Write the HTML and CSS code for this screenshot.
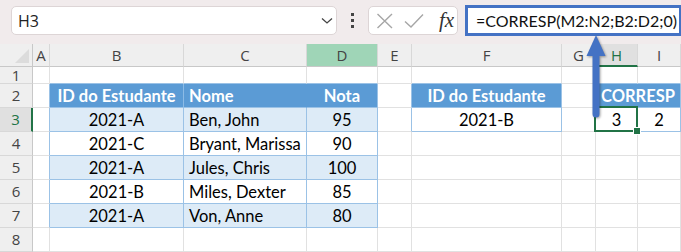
FILE: index.html
```html
<!DOCTYPE html>
<html lang="pt">
<head>
    <meta charset="UTF-8">
    <title>CORRESP</title>
    <link rel="stylesheet" href="styles.css">
</head>
<body>
    <div class="app">
        <!-- barra de fórmulas -->
        <div class="formula-bar">
            <div class="name-box">
                <span>H3</span>
                <svg class="chevron" width="12" height="8" viewBox="0 0 12 8"><path d="M1 1.5 L6 6 L11 1.5" fill="none" stroke="#444" stroke-width="1.3"/></svg>
            </div>
            <div class="dots"><i></i><i></i><i></i></div>
            <div class="fx-box">
                <svg width="18" height="16" viewBox="0 0 18 16"><path d="M1.5 1 L16 15 M16 1 L1.5 15" stroke="#a6a6a6" stroke-width="1.4" fill="none"/></svg>
                <svg width="20" height="16" viewBox="0 0 20 16"><path d="M1 8.5 L7 14 L19 1.5" stroke="#a6a6a6" stroke-width="1.4" fill="none"/></svg>
                <span class="fx">fx</span>
            </div>
            <div class="formula">=CORRESP(M2:N2;B2:D2;0)</div>
        </div>

        <!-- planilha -->
        <div class="sheet">
            <div class="corner"></div>
            <div class="ch">A</div>
            <div class="ch">B</div>
            <div class="ch">C</div>
            <div class="ch ch-green">D</div>
            <div class="ch">E</div>
            <div class="ch">F</div>
            <div class="ch">G</div>
            <div class="ch ch-sel">H</div>
            <div class="ch">I</div>

            <!-- linha 1 -->
            <div class="rh rh-first">1</div>
            <div class="c"></div>
            <div class="c bb"></div>
            <div class="c bb"></div>
            <div class="c bb"></div>
            <div class="c"></div>
            <div class="c bb"></div>
            <div class="c"></div>
            <div class="c bb"></div>
            <div class="c bb"></div>

            <!-- linha 2 -->
            <div class="rh">2</div>
            <div class="c br"></div>
            <div class="c th th-split center">ID do Estudante</div>
            <div class="c th th-join left">Nome</div>
            <div class="c th center">Nota</div>
            <div class="c br"></div>
            <div class="c th center">ID do Estudante</div>
            <div class="c br"></div>
            <div class="c th span2 center">CORRESP</div>

            <!-- linha 3 -->
            <div class="rh rh-sel">3</div>
            <div class="c br"></div>
            <div class="c t band center">2021-A</div>
            <div class="c t band left">Ben, John</div>
            <div class="c t band center">95</div>
            <div class="c br"></div>
            <div class="c t center">2021-B</div>
            <div class="c br"></div>
            <div class="c t center selected">3</div>
            <div class="c t center">2</div>

            <!-- linha 4 -->
            <div class="rh">4</div>
            <div class="c br"></div>
            <div class="c t center">2021-C</div>
            <div class="c t left">Bryant, Marissa</div>
            <div class="c t center">90</div>
            <div class="c"></div>
            <div class="c"></div>
            <div class="c"></div>
            <div class="c"></div>
            <div class="c"></div>

            <!-- linha 5 -->
            <div class="rh">5</div>
            <div class="c br"></div>
            <div class="c t band center">2021-A</div>
            <div class="c t band left">Jules, Chris</div>
            <div class="c t band center">100</div>
            <div class="c"></div>
            <div class="c"></div>
            <div class="c"></div>
            <div class="c"></div>
            <div class="c"></div>

            <!-- linha 6 -->
            <div class="rh">6</div>
            <div class="c br"></div>
            <div class="c t center">2021-B</div>
            <div class="c t left">Miles, Dexter</div>
            <div class="c t center">85</div>
            <div class="c"></div>
            <div class="c"></div>
            <div class="c"></div>
            <div class="c"></div>
            <div class="c"></div>

            <!-- linha 7 -->
            <div class="rh">7</div>
            <div class="c br"></div>
            <div class="c t band center">2021-A</div>
            <div class="c t band left">Von, Anne</div>
            <div class="c t band center">80</div>
            <div class="c"></div>
            <div class="c"></div>
            <div class="c"></div>
            <div class="c"></div>
            <div class="c"></div>

            <!-- linha 8 -->
            <div class="rh">8</div>
            <div class="c"></div>
            <div class="c"></div>
            <div class="c"></div>
            <div class="c"></div>
            <div class="c"></div>
            <div class="c"></div>
            <div class="c"></div>
            <div class="c"></div>
            <div class="c"></div>
        </div>

        <!-- seta azul -->
        <svg class="arrow" width="30" height="90" viewBox="0 0 30 90">
            <path d="M11.5 20 L11.5 80 A3.5 3.5 0 0 0 18.5 80 L18.5 20 Z" fill="#4472c4"/>
            <path d="M15 1 L24.5 22 L5.5 22 Z" fill="#4472c4"/>
        </svg>
    </div>
</body>
</html>
```

FILE: styles.css
```css
/* Reset */
* {
    margin: 0;
    padding: 0;
    box-sizing: border-box;
}

body {
    width: 681px;
    height: 252px;
    overflow: hidden;
    background: #ffffff;
    font-family: 'Lato', 'Liberation Sans', sans-serif;
}

.app {
    position: relative;
    width: 681px;
    height: 252px;
}

/* Barra de fórmulas */
.formula-bar {
    height: 44px;
    background: #f1ebec;
    display: flex;
    align-items: flex-start;
    padding: 6px 0 0 11px;
}

.name-box {
    flex-shrink: 0;
    width: 326px;
    height: 29px;
    background: #ffffff;
    border: 1px solid #ddd5d6;
    border-radius: 5px;
    display: flex;
    align-items: center;
    justify-content: space-between;
    padding: 0 3px 0 6px;
    font-family: 'Open Sans', sans-serif;
    font-size: 16px;
    color: #222;
}

.dots {
    flex-shrink: 0;
    width: 31px;
    height: 29px;
    display: flex;
    flex-direction: column;
    align-items: center;
    justify-content: center;
    gap: 3px;
}

.dots i {
    display: block;
    width: 3px;
    height: 3px;
    background: #444;
}

.fx-box {
    flex-shrink: 0;
    width: 90px;
    height: 29px;
    background: #ffffff;
    border: 1px solid #ddd5d6;
    border-radius: 5px;
    display: flex;
    align-items: center;
    gap: 10px;
    padding-left: 7px;
}

.fx {
    font-family: 'Liberation Serif', serif;
    font-style: italic;
    font-size: 21px;
    color: #333;
    margin-left: 5px;
    line-height: 1;
}

.formula {
    margin: -1px 0 0 7px;
    flex: 1;
    min-width: 0;
    overflow: hidden;
    white-space: nowrap;
    height: 31px;
    border: 3px solid #4472c4;
    border-right-width: 2px;
    background: #ffffff;
    padding-left: 8px;
    font-size: 16px;
    line-height: 25px;
    color: #111;
}

/* Planilha */
.sheet {
    display: grid;
    grid-template-columns: 33px 17px 134px 123px 71px 34px 150px 34px 42px 1fr;
    grid-template-rows: 23px 17px repeat(7, 24px);
}

.corner {
    position: relative;
    background: #efefef;
    border-right: 1px solid #c8c8c8;
    border-bottom: 1px solid #c8c8c8;
}

.corner::after {
    content: "";
    position: absolute;
    right: 3px;
    bottom: 3px;
    border-style: solid;
    border-width: 0 0 14px 14px;
    border-color: transparent transparent #dcdcdc transparent;
}

.ch {
    background: #efefef;
    border-right: 1px solid #d8d8d8;
    border-bottom: 1px solid #c8c8c8;
    font-family: 'Open Sans', sans-serif;
    font-size: 15px;
    color: #444;
    text-align: center;
    line-height: 22px;
}

.ch-green {
    background: #9fd5b7;
}

.ch-sel {
    background: #e0e0e0;
    color: #217346;
    border-bottom: 2px solid #217346;
}

.rh {
    background: #efefef;
    border-right: 1px solid #c8c8c8;
    border-bottom: 1px solid #d8d8d8;
    font-family: 'Open Sans', sans-serif;
    font-size: 15px;
    color: #444;
    text-align: center;
    line-height: 23px;
}

.rh-first {
    line-height: 16px;
}

.rh-sel {
    background: #e0e0e0;
    color: #217346;
    border-right: 2px solid #217346;
}

/* Células */
.c {
    border-right: 1px solid #e1e1e1;
    border-bottom: 1px solid #e1e1e1;
    font-size: 16.5px;
    line-height: 24px;
    color: #000;
    white-space: nowrap;
}

.c.bb {
    border-bottom-color: #9bc2e6;
}

.c.br {
    border-right-color: #9bc2e6;
}

.c.t {
    border-right-color: #9bc2e6;
    border-bottom-color: #9bc2e6;
}

.c.band {
    background: #ddebf7;
}

.c.th {
    background: #5b9bd5;
    color: #ffffff;
    font-weight: 700;
    border-right-color: #9bc2e6;
    border-bottom-color: #9bc2e6;
}

.c.th-split {
    border-right-color: #8cbbe6;
}

.c.th-join {
    border-right-color: #5b9bd5;
}

.span2 {
    grid-column: span 2;
}

.center {
    text-align: center;
}

.left {
    padding-left: 5px;
}

/* Célula selecionada */
.selected {
    position: relative;
}

.selected::before {
    content: "";
    position: absolute;
    left: -2px;
    top: -2px;
    right: -1px;
    bottom: -1px;
    border: 2px solid #217346;
}

.selected::after {
    content: "";
    position: absolute;
    right: -4px;
    bottom: -4px;
    width: 6px;
    height: 6px;
    background: #217346;
    border: 1px solid #ffffff;
}

/* Seta */
.arrow {
    position: absolute;
    left: 581px;
    top: 34px;
    filter: drop-shadow(1px 1px 1px rgba(0, 0, 0, 0.35));
}
```
